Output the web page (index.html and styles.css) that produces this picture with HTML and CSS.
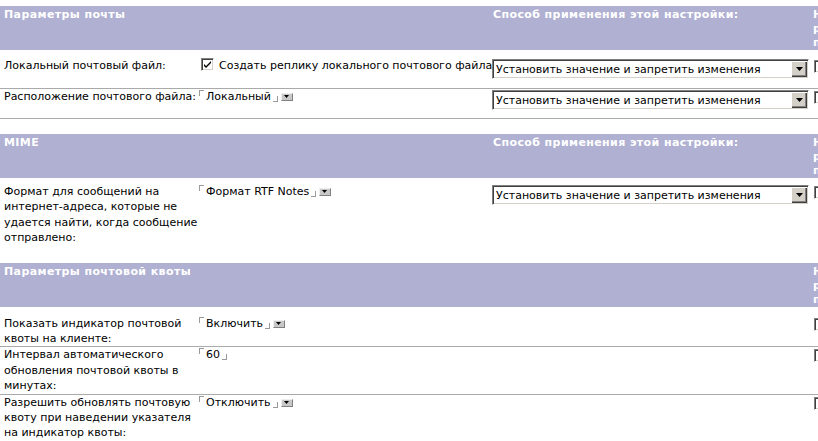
FILE: index.html
```html
<!DOCTYPE html>
<html lang="ru">
<head>
    <meta charset="UTF-8">
    <title>Параметры почты</title>
    <link rel="stylesheet" href="styles.css">
</head>
<body>

    <table class="sect">
        <colgroup>
            <col class="c-lbl"><col class="c-val"><col class="c-how"><col class="c-lock">
        </colgroup>
        <tr class="head">
            <th>Параметры почты</th>
            <th></th>
            <th class="h-how">Способ применения этой настройки:</th>
            <th class="h-lock">Не разрешать переопределение</th>
        </tr>
        <tr class="line first">
            <td class="lbl">Локальный почтовый файл:</td>
            <td class="val">
                <span class="box"><svg width="9" height="9" viewBox="0 0 9 9"><path d="M1 4 L3 6 L8 1 L8 3 L3 8 L1 6 Z" fill="#000"/></svg></span>Создать реплику локального почтового файла
            </td>
            <td class="how">
                <div class="combo"><span class="combo-text">Установить значение и запретить изменения</span><span class="combo-btn"><svg width="7" height="4" viewBox="0 0 7 4"><path d="M0 0 H7 L3.5 4 Z" fill="#000"/></svg></span></div>
            </td>
            <td class="lock"><span class="box"></span></td>
        </tr>
        <tr class="line">
            <td class="lbl">Расположение почтового файла:</td>
            <td class="val">
                <span class="fld"><span class="mark-open"></span>Локальный<span class="mark-close"></span><span class="pick"><svg width="5" height="3" viewBox="0 0 5 3"><path d="M0 0 H5 L2.5 3 Z" fill="#000"/></svg></span></span>
            </td>
            <td class="how">
                <div class="combo"><span class="combo-text">Установить значение и запретить изменения</span><span class="combo-btn"><svg width="7" height="4" viewBox="0 0 7 4"><path d="M0 0 H7 L3.5 4 Z" fill="#000"/></svg></span></div>
            </td>
            <td class="lock"><span class="box"></span></td>
        </tr>
    </table>

    <table class="sect mime">
        <colgroup>
            <col class="c-lbl"><col class="c-val"><col class="c-how"><col class="c-lock">
        </colgroup>
        <tr class="head">
            <th>MIME</th>
            <th></th>
            <th class="h-how">Способ применения этой настройки:</th>
            <th class="h-lock">Не разрешать переопределение</th>
        </tr>
        <tr class="first tall">
            <td class="lbl">Формат для сообщений на<br>интернет-адреса, которые не<br>удается найти, когда сообщение<br>отправлено:</td>
            <td class="val">
                <span class="fld"><span class="mark-open"></span>Формат RTF Notes<span class="mark-close"></span><span class="pick"><svg width="5" height="3" viewBox="0 0 5 3"><path d="M0 0 H5 L2.5 3 Z" fill="#000"/></svg></span></span>
            </td>
            <td class="how">
                <div class="combo"><span class="combo-text">Установить значение и запретить изменения</span><span class="combo-btn"><svg width="7" height="4" viewBox="0 0 7 4"><path d="M0 0 H7 L3.5 4 Z" fill="#000"/></svg></span></div>
            </td>
            <td class="lock"><span class="box"></span></td>
        </tr>
    </table>

    <table class="sect quota">
        <colgroup>
            <col class="c-lbl"><col class="c-val"><col class="c-how"><col class="c-lock">
        </colgroup>
        <tr class="head">
            <th>Параметры почтовой квоты</th>
            <th></th>
            <th></th>
            <th class="h-lock">Не разрешать переопределение</th>
        </tr>
        <tr class="line first">
            <td class="lbl">Показать индикатор почтовой<br>квоты на клиенте:</td>
            <td class="val">
                <span class="fld"><span class="mark-open"></span>Включить<span class="mark-close"></span><span class="pick"><svg width="5" height="3" viewBox="0 0 5 3"><path d="M0 0 H5 L2.5 3 Z" fill="#000"/></svg></span></span>
            </td>
            <td class="how"></td>
            <td class="lock"><span class="box"></span></td>
        </tr>
        <tr class="line">
            <td class="lbl">Интервал автоматического<br>обновления почтовой квоты в<br>минутах:</td>
            <td class="val">
                <span class="fld"><span class="mark-open"></span>60<span class="mark-close"></span></span>
            </td>
            <td class="how"></td>
            <td class="lock"><span class="box"></span></td>
        </tr>
        <tr>
            <td class="lbl">Разрешить обновлять почтовую<br>квоту при наведении указателя<br>на индикатор квоты:</td>
            <td class="val">
                <span class="fld"><span class="mark-open"></span>Отключить<span class="mark-close"></span><span class="pick"><svg width="5" height="3" viewBox="0 0 5 3"><path d="M0 0 H5 L2.5 3 Z" fill="#000"/></svg></span></span>
            </td>
            <td class="how"></td>
            <td class="lock"><span class="box"></span></td>
        </tr>
    </table>

</body>
</html>
```

FILE: styles.css
```css
body {
    margin: 0;
    padding-top: 6px;
    background-color: #fff;
    color: #000;
    font-family: "DejaVu Sans", Verdana, sans-serif;
    font-size: 11px;
    line-height: 15.4px;
    overflow: hidden;
}

.sect {
    width: 892px;
    border-collapse: collapse;
    table-layout: fixed;
}

.mime {
    margin-top: 15px;
}

.quota {
    margin-top: 17px;
}

.c-lbl { width: 197px; }
.c-val { width: 294px; }
.c-how { width: 321px; }
.c-lock { width: 80px; }

.head {
    height: 44px;
}

.head th {
    background-color: #b0b0d2;
    color: #fff;
    font-weight: bold;
    text-align: left;
    vertical-align: top;
    line-height: 14px;
    letter-spacing: 0.4px;
    padding: 2px 0 0 4px;
}

.head .h-how {
    padding-left: 2px;
}

.head .h-lock {
    padding-left: 1px;
}

td {
    vertical-align: top;
    padding: 0 0 8px 0;
    white-space: nowrap;
}

.first td {
    padding-top: 8px;
    padding-bottom: 9px;
}

.tall td {
    padding-top: 6px;
    padding-bottom: 0;
}

.quota td {
    padding-bottom: 0;
}

.quota .first td {
    padding-top: 9px;
    padding-bottom: 0;
}

.line td {
    border-bottom: 1px solid #aaaaaa;
}

.lbl {
    padding-left: 4px;
}

.val {
    padding-left: 2px;
}

.how {
    padding-left: 1px;
}

.lock {
    padding-left: 2px;
}

/* checkbox */
.box {
    display: inline-block;
    width: 13px;
    height: 13px;
    box-sizing: border-box;
    border: 1px solid;
    border-color: #808080 #fff #fff #808080;
    box-shadow: inset 1px 1px #404040, inset -1px -1px #d4d0c8;
    background-color: #fff;
    vertical-align: -2px;
    position: relative;
}

.box svg {
    position: absolute;
    left: 1px;
    top: 1px;
}

.val .box {
    margin: 0 5px 0 2px;
}

.lock .box {
    margin-top: 2px;
    vertical-align: top;
}

/* combobox */
.combo {
    display: flex;
    width: 317px;
    height: 20px;
    box-sizing: border-box;
    margin-top: 1px;
    padding: 1px;
    border: 1px solid;
    border-color: #808080 #fff #fff #808080;
    box-shadow: inset 1px 1px #404040, inset -1px -1px #d4d0c8;
    background-color: #fff;
}

.combo-text {
    flex: 1;
    padding: 1px 0 0 2px;
    line-height: 15px;
    overflow: hidden;
}

.combo-btn {
    width: 16px;
    height: 16px;
    display: flex;
    align-items: center;
    justify-content: center;
    background-color: #d4d0c8;
    box-shadow: inset 1px 1px #fff, inset -1px -1px #404040, inset -2px -2px #808080;
}

/* notes field markers */
.fld {
    white-space: nowrap;
}

.mark-open,
.mark-close {
    display: inline-block;
    width: 4px;
    height: 5px;
    border: 0 solid #9a9a9a;
}

.mark-open {
    border-left-width: 1px;
    border-top-width: 1px;
    vertical-align: top;
    margin: 1px 2px 0 0;
}

.mark-close {
    border-right-width: 1px;
    border-bottom-width: 1px;
    vertical-align: -2px;
    margin-left: 2px;
}

.pick {
    display: inline-block;
    width: 10px;
    height: 6px;
    margin-left: 3px;
    background-color: #c8c8c8;
    border: 1px solid;
    border-color: #eee #808080 #808080 #eee;
    vertical-align: -1px;
    position: relative;
}

.pick svg {
    position: absolute;
    left: 2px;
    top: 1px;
}
```
